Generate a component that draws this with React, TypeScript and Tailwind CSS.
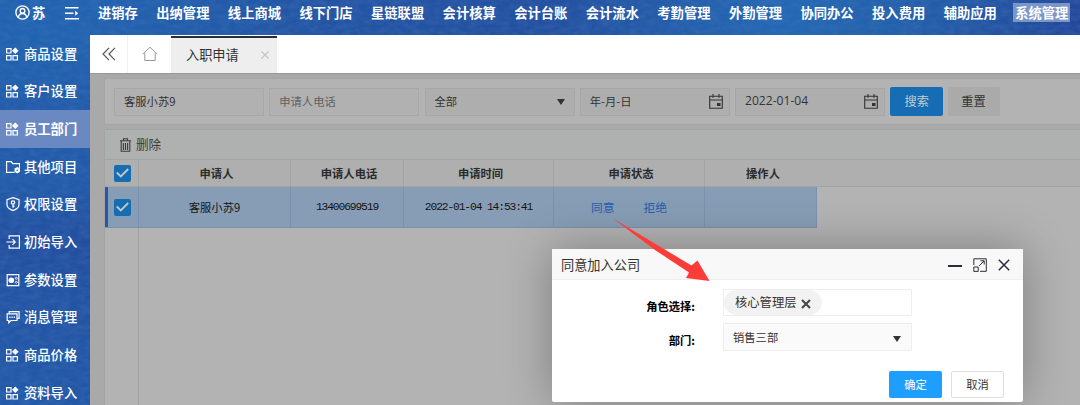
import type { ReactNode } from 'react'
import clsx from 'clsx'

const menus = [
  '进销存',
  '出纳管理',
  '线上商城',
  '线下门店',
  '星链联盟',
  '会计核算',
  '会计台账',
  '会计流水',
  '考勤管理',
  '外勤管理',
  '协同办公',
  '投入费用',
  '辅助应用',
  '系统管理',
]

type IconName = 'apps' | 'folder' | 'shield' | 'import' | 'params' | 'message'

const sideItems: { label: string; icon: IconName }[] = [
  { label: '商品设置', icon: 'apps' },
  { label: '客户设置', icon: 'apps' },
  { label: '员工部门', icon: 'apps' },
  { label: '其他项目', icon: 'folder' },
  { label: '权限设置', icon: 'shield' },
  { label: '初始导入', icon: 'import' },
  { label: '参数设置', icon: 'params' },
  { label: '消息管理', icon: 'message' },
  { label: '商品价格', icon: 'apps' },
  { label: '资料导入', icon: 'apps' },
]

const iconShapes: Record<IconName, ReactNode> = {
  apps: (
    <>
      <path d="M.6 1.600h4.400v4.400H.6zM.6 8.600h4.400V13H.6zM7 8.600h4.400V13H7z" />
      <path d="M9.300.4l3.300 3.300L9.300 7 6 3.700z" fill="currentColor" stroke="none" />
    </>
  ),
  folder: (
    <>
      <path d="M8.500 12.300H.6V1.600h4.600l1.600 2h6.800v4.400" />
      <path d="M11.300 7l2.800 1.600v3.200l-2.800 1.600-2.800-1.600V8.600z" fill="currentColor" stroke="none" />
      <circle cx="11.300" cy="10.200" r=".8" fill="#2458a8" stroke="none" />
    </>
  ),
  shield: (
    <>
      <path d="M7 .6l6 2v5.200c0 2.700-2.800 4.600-6 5.800C3.800 12.400 1 10.500 1 7.800V2.600z" />
      <circle cx="7" cy="5.500" r="1.700" />
      <path d="M7 7.200v3.500M7 9.300h1.500" />
    </>
  ),
  import: (
    <>
      <path d="M3.200 4V.8h10.200v12.400H3.200V10" />
      <path d="M.3 7h8.900M6.500 4.200L9.200 7 6.500 9.800" />
    </>
  ),
  params: (
    <>
      <path d="M1.200 1.600h11.600v11H1.200z" />
      <circle cx="5.300" cy="7.300" r="2.800" fill="currentColor" stroke="none" />
      <circle cx="10.300" cy="5.300" r="1" strokeWidth=".8" />
      <circle cx="10.300" cy="9.300" r="1" strokeWidth=".8" />
    </>
  ),
  message: (
    <>
      <path d="M1.200 3.800h9.800v6.700H5L2.800 12.800v-2.300H1.200z" />
      <path d="M3.200 3.500V1.600h9.900v6.700h-1.800" />
      <path d="M3.300 7.200h1.200M5.500 7.200h1.200M7.700 7.200h1.200" strokeWidth="1.500" />
    </>
  ),
}

function SideIcon({ name }: { name: IconName }) {
  return (
    <svg className="size-[14px] shrink-0" viewBox="0 0 14 14" fill="none" stroke="currentColor" strokeWidth="1.200">
      {iconShapes[name]}
    </svg>
  )
}

// woven blue backdrop shared by the top bar and the sidebar
function Backdrop() {
  return (
    <svg className="absolute inset-0 h-full w-full" aria-hidden>
      <filter id="weave" x="0" y="0" width="100%" height="100%">
        <feTurbulence type="fractalNoise" baseFrequency="0.1 0.2" numOctaves="4" seed="4" />
        <feColorMatrix values="0 0 0 0 0.08  0 0 0 0 0.2  0 0 0 0 0.5  1.2 0 0 0 -0.38" />
      </filter>
      <linearGradient id="shade" x1="0" y1="0" x2="0" y2="1">
        <stop offset=".1" stopColor="#234a9c" stopOpacity="0" />
        <stop offset=".3" stopColor="#234a9c" stopOpacity=".35" />
        <stop offset=".45" stopColor="#234a9c" stopOpacity=".3" />
        <stop offset=".6" stopColor="#234a9c" stopOpacity=".8" />
        <stop offset=".75" stopColor="#234a9c" stopOpacity=".55" />
        <stop offset="1" stopColor="#234a9c" stopOpacity=".35" />
      </linearGradient>
      <rect width="90" height="100%" fill="url(#shade)" />
      <rect width="100%" height="100%" filter="url(#weave)" opacity=".45" />
    </svg>
  )
}

function TopBar() {
  return (
    <header className="relative flex h-[35px] shrink-0 items-start whitespace-nowrap text-[13.300px] font-bold text-white">
      <div className="mt-[3px] ml-[15px] flex h-[19px] w-[50px] shrink-0 items-center gap-[2px]">
        <svg className="size-[15px]" viewBox="0 0 15 15" fill="none" stroke="currentColor" strokeWidth="1.400">
          <circle cx="7.500" cy="7.500" r="6.600" />
          <circle cx="7.500" cy="5.800" r="2.300" />
          <path d="M3.300 12.300c.5-2.600 2-3.800 4.200-3.800s3.700 1.200 4.200 3.800" />
        </svg>
        <span>苏</span>
      </div>
      <svg className="mt-[6px] h-[14px] w-[14px] shrink-0" viewBox="0 0 14 14" fill="none" stroke="currentColor" strokeWidth="1.500">
        <path d="M0 1.800h13.500M0 7.300h8.500M0 12.800h14" />
        <path d="M10.200 4.800v5L13.200 7.300z" fill="currentColor" stroke="none" />
      </svg>
      <nav className="mt-[3px] ml-[17px] flex h-[19px] leading-[19px]">
        {menus.map((m) => (
          <span key={m} className={clsx('mr-[14.400px] px-[2px]', m === '系统管理' && 'bg-[#7c95c9]')}>
            {m}
          </span>
        ))}
      </nav>
    </header>
  )
}

function Sidebar() {
  return (
    <aside className="relative w-[90px] shrink-0 overflow-hidden text-[13.300px] font-medium text-white">
      {sideItems.map(({ label, icon }) => (
        <div
          key={label}
          className={clsx(
            'flex h-[37.650px] items-center gap-[4px] pl-[6px] whitespace-nowrap',
            label === '员工部门' && 'bg-[#6a89c2] font-bold',
          )}
        >
          <SideIcon name={icon} />
          {label}
        </div>
      ))}
    </aside>
  )
}

function Tabs() {
  return (
    <div className="flex h-[38px] shrink-0 bg-white text-[#555]">
      <div className="flex w-[38px] items-center justify-center border-r border-[#f0f0f0]">
        <svg className="size-[14px]" viewBox="0 0 14 14" fill="none" stroke="currentColor" strokeWidth="1.200">
          <path d="M7 .8L1 7l6 6.200M13 .8L7 7l6 6.200" />
        </svg>
      </div>
      <div className="flex w-[43px] items-center justify-center">
        <svg className="size-[16px]" viewBox="0 0 16 16" fill="none" stroke="#999" strokeWidth="1">
          <path d="M.8 8L8 1.200 15.200 8M2.800 6.700v7.800h10.400V6.700" />
        </svg>
      </div>
      <div className="mt-px flex w-[106px] items-center justify-between border-t-2 border-[#292c3d] bg-[#eee] pr-[8px] pb-[2px] pl-[15px] text-[13.200px] text-[#333]">
        入职申请
        <svg className="size-[8px]" viewBox="0 0 8 8" stroke="#c4c4c4" strokeWidth="1.200">
          <path d="M.5.5l7 7M7.500.5l-7 7" />
        </svg>
      </div>
    </div>
  )
}

function CalendarIcon() {
  return (
    <svg className="h-[15px] w-[14px]" viewBox="0 0 14 15" fill="none" stroke="#333" strokeWidth="1.100">
      <path d="M.7 2.200h12.600v12H.7zM.7 6h12.600M4 0v3.800M10 0v3.800" />
      <path d="M8 9h3.500v3H8z" fill="#333" stroke="none" />
    </svg>
  )
}

function Caret() {
  return (
    <svg className="h-[6px] w-[8px]" viewBox="0 0 8 6">
      <path d="M0 0h8L4 6z" fill="#333" />
    </svg>
  )
}

function Field({ children, icon, muted }: { children: ReactNode; icon?: ReactNode; muted?: boolean }) {
  return (
    <div
      className={clsx(
        'flex h-[28px] w-[150px] shrink-0 items-center justify-between border border-[#a7a7a7] pr-[6px] pl-[9px]',
        muted ? 'text-[#616161]' : 'text-[#333]',
        icon ? 'bg-[#aeaeae]' : 'bg-[#b1b1b1]',
      )}
    >
      {children}
      {icon}
    </div>
  )
}

function SearchBar() {
  return (
    <div className="flex h-[47px] shrink-0 items-center gap-[5.250px] border border-r-0 border-[#a5a5a5] bg-[#b3b3b3] pl-[9px] text-[11.300px]">
      <Field>客服小苏9</Field>
      <Field muted>申请人电话</Field>
      <Field icon={<span className="pr-[3px]"><Caret /></span>}>全部</Field>
      <Field icon={<CalendarIcon />}>年-月-日</Field>
      <Field icon={<CalendarIcon />}>
        <span className="font-['Open_Sans'] text-[12.100px]">2022-01-04</span>
      </Field>
      <button className="-mt-px h-[29px] w-[53px] rounded-[2px] bg-[#166db3] text-[12.200px] text-[#c4ccd2]">搜索</button>
      <button className="-mt-px -ml-px h-[29px] w-[52px] rounded-[2px] bg-[#aaa] text-[12.200px] text-[#333]">重置</button>
    </div>
  )
}

function Check() {
  return (
    <span className="flex size-[17px] items-center justify-center rounded-[2px] bg-[#176db2]">
      <svg className="h-[10px] w-[13px]" viewBox="0 0 13 10" fill="none" stroke="#c0c8ce" strokeWidth="1.800">
        <path d="M.8 4.500l4 4L12.200 1" />
      </svg>
    </span>
  )
}

const cols = 'grid grid-cols-[34px_152px_113px_150px_151px_112px]'
const headCell = 'flex items-center justify-center border-r border-[#a1a4a5]'
const headText = clsx(headCell, 'pl-[4px]')
const bodyCell = 'flex items-center justify-center border-r border-[#7b91ab]'
const digits = "font-['Liberation_Mono'] text-[11.300px] tracking-[-1.130px]"

function RequestTable() {
  return (
    <section className="mt-[4px] flex flex-1 flex-col border-t border-l border-[#a1a4a3] bg-[#b3b3b3]">
      <div className="flex h-[29px] shrink-0 items-center gap-[5px] bg-[#aeb1af] pl-[15px] text-[12.600px] text-[#3c3c3c]">
        <svg className="h-[14px] w-[11px]" viewBox="0 0 11 14" fill="none" stroke="#3c3c3c" strokeWidth="1.100">
          <path d="M0 2.700h11M3.500 2.500V.7h4v1.800M1.200 3v10.300h8.600V3M3.400 5v7M5.500 5v7M7.600 5v7" />
        </svg>
        删除
      </div>
      <div className="h-[28px] shrink-0 border-y border-[#a1a4a3] bg-[#aeafae]">
        <div className={clsx(cols, 'h-full w-[712px] text-[11.300px] font-bold text-[#2b2b2b]')}>
          <div className={clsx(headCell, 'pl-px')}><Check /></div>
          <div className={headText}>申请人</div>
          <div className={headText}>申请人电话</div>
          <div className={headText}>申请时间</div>
          <div className={headText}>申请状态</div>
          <div className="flex items-center justify-center pl-[4px]">操作人</div>
        </div>
      </div>
      <div className={clsx(cols, 'h-[41px] w-[712px] shrink-0 border-b border-[#7890aa] bg-[#879db5] text-[11.300px] text-[#151515]')}>
        <div className="flex items-center justify-center border-r border-l-[3px] border-[#7b91ab] border-l-[#2458ae] pr-[2px]">
          <Check />
        </div>
        <div className={bodyCell}>客服小苏9</div>
        <div className={clsx(bodyCell, digits)}>13400699519</div>
        <div className={clsx(bodyCell, digits)}>2022-01-04 14:53:41</div>
        <div className={clsx(bodyCell, 'gap-[29px] text-[11.800px] text-[#265cae]')}>
          <span>同意</span>
          <span>拒绝</span>
        </div>
        <div className="border-r border-[#7b91ab]" />
      </div>
      <div className="w-[34px] flex-1 border-r border-[#a1a1a1]" />
    </section>
  )
}

function JoinDialog() {
  return (
    <div className="absolute top-[249px] left-[552px] flex h-[153px] w-[471px] flex-col rounded-[2px] bg-white text-[#333] shadow-[0_0_48px_rgba(0,0,0,0.3)]">
      <div className="flex h-[31px] shrink-0 items-center justify-between border-b border-[#eee] bg-[#f8f8f8] pt-[2px] pr-[13px] pl-[9px] text-[13.200px]">
        同意加入公司
        <div className="flex items-center gap-[11px] text-[#2d2c3b]">
          <span className="mt-px h-[2px] w-[14px] bg-[#2d2c3b]" />
          <svg className="size-[14px]" viewBox="0 0 14 14" fill="none" stroke="currentColor" strokeWidth="1">
            <path d="M.8 7V.8h12.500v12.500H7M.8 9h4.400v4.400H.8zM6 8l5-5M7.500 2.800h3.700v3.700" />
          </svg>
          <svg className="size-[12px]" viewBox="0 0 12 12" stroke="currentColor" strokeWidth="1.500">
            <path d="M.8.8l10.400 10.400M11.200.8L.8 11.200" />
          </svg>
        </div>
      </div>
      <div className="mt-[9px] flex h-[27px] items-center">
        <label className="w-[143px] pt-[8px] text-right text-[11.300px] font-bold text-black">角色选择:</label>
        <div className="ml-[28px] flex h-full w-[189px] items-center border border-[#eee]">
          <span className="flex h-[25px] items-center gap-[4px] rounded-full bg-[#f2f2f2] pr-[11px] pl-[11px] text-[12.300px]">
            核心管理层
            <svg className="mt-[2px] size-[10px]" viewBox="0 0 10 10" stroke="#444" strokeWidth="2">
              <path d="M1 1l8 8M9 1L1 9" />
            </svg>
          </span>
        </div>
      </div>
      <div className="mt-[7px] flex h-[28px] items-center">
        <label className="w-[143px] pt-[7px] text-right text-[11.300px] font-bold text-black">部门:</label>
        <div className="ml-[28px] flex h-full w-[189px] items-center justify-between border border-[#eee] bg-[#fafafa] pr-[10px] pl-[9px] text-[11.300px]">
          销售三部
          <span className="pt-[3px]"><Caret /></span>
        </div>
      </div>
      <div className="mt-[20px] flex justify-end gap-[9px] pr-[19px] text-[11.300px]">
        <button className="h-[27px] w-[53px] rounded-[2px] bg-[#1e9fff] text-white">确定</button>
        <button className="h-[27px] w-[53px] rounded-[2px] border border-[#dedede] bg-white">取消</button>
      </div>
    </div>
  )
}

export default function App() {
  return (
    <div className="relative flex h-[405px] w-[1080px] flex-col overflow-hidden bg-[linear-gradient(100deg,#2163b0_0%,#2263b0_8%,#2355a4_28%,#2350a0_48%,#2468b4_68%,#235faa_80%,#23489a_94%,#2258a8_100%)] font-['Noto_Sans_CJK_SC',sans-serif]">
      <Backdrop />
      <TopBar />
      <div className="flex min-h-0 flex-1">
        <Sidebar />
        <main className="relative flex min-w-0 flex-1 flex-col bg-[#a9a9a9]">
          <Tabs />
          <div className="flex flex-1 flex-col border-t border-[#999] pt-[4px] pl-[14px]">
            <SearchBar />
            <RequestTable />
          </div>
        </main>
      </div>
      <JoinDialog />
      <svg className="absolute top-[215px] left-[610px] h-[70px] w-[105px]" viewBox="610 215 105 70" aria-hidden>
        <path d="M613 218.500L691.500 265.500 697.500 260.500 709.500 281 686 278 689 272.500 655 250z" fill="#fc3c39" />
      </svg>
    </div>
  )
}
